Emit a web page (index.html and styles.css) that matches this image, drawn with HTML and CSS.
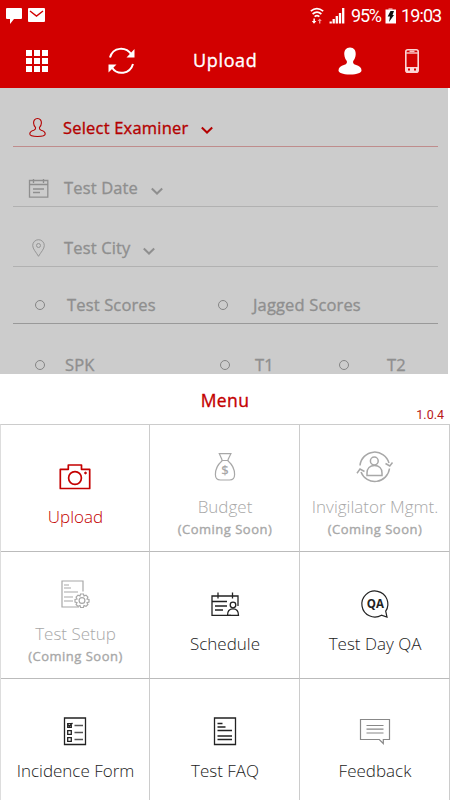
FILE: index.html
```html
<!DOCTYPE html>
<html lang="en">
<head>
    <meta charset="UTF-8">
    <meta name="viewport" content="width=device-width, initial-scale=1.0">
    <title>Upload</title>
    <link rel="stylesheet" href="styles.css">
</head>
<body>
    <div class="app">
        <div class="status-bar">
            <svg class="notifications" width="40" height="18" viewBox="0 0 40 18">
                <path fill="#fff" d="M1 1h14q1 0 1 1v9q0 1-1 1H8l-4 5v-5H1q-1 0-1-1V2q0-1 1-1zM23 1h15q1 0 1 1v12q0 1-1 1H23q-1 0-1-1V2q0-1 1-1z"/>
                <path fill="none" stroke="#d20000" stroke-width="1.4" d="M24 4l6.5 5L37 4"/>
            </svg>
            <svg width="35" height="18" viewBox="0 0 35 18">
                <g fill="none" stroke="#fff" stroke-width="1.7">
                    <path d="M0.8 4.2q6-5 12.4 0M2.6 7q4.400-3.600 8.800 0M4.600 9.600q2.400-1.800 4.800 0"/>
                    <path d="M20.700 16.500v-2M23.700 16.500V12M26.800 16.500V9M30 16.500V6M33.200 16.500V1" stroke-width="2.300"/>
                </g>
                <path fill="#fff" d="M3.400 11.500h1.500v2.500h1.500L4 16.800 1.800 14h1.600z"/>
                <path fill="#f39999" d="M9 16.500v-2.500H7.600l2.100-2.400 2.100 2.400h-1.400v2.500z"/>
            </svg>
            <span class="battery-text">95%</span>
            <svg width="12" height="18" viewBox="0 0 12 18">
                <path fill="#e77" d="M3.500 1h4v2h-4z"/>
                <path fill="#fff" d="M0.500 2.500h10.500V16.500H0.500z"/>
                <path fill="#111" d="M5.500 4h3.500L7.500 8H9l-5 7 1-5.500H2.700z"/>
            </svg>
            <span class="clock">19:03</span>
        </div>

        <div class="header">
            <svg class="grid-icon" width="22" height="22" viewBox="0 0 22 22" fill="#fff">
                <path d="M0 0h6v6H0zM8 0h6v6H8zM16 0h6v6h-6zM0 8h6v6H0zM8 8h6v6H8zM16 8h6v6h-6zM0 16h6v6H0zM8 16h6v6H8zM16 16h6v6h-6z"/>
            </svg>
            <svg class="sync-icon" width="28" height="28" viewBox="0 0 28 28">
                <path fill="none" stroke="#fff" stroke-width="2" d="M2 10.500C5 -.5 18 -.5 23.500 7.500M25 17C22 27.500 9 28.500 4 20.500"/>
                <path fill="#fff" d="M26.500 2v8.500h-8zM.500 17.500h8L.500 25.500z"/>
            </svg>
            <h1>Upload</h1>
            <svg class="user-icon" width="24" height="28" viewBox="0 0 24 28">
                <path fill="#fff" d="M12 .500c4 0 6 3 5.700 7-.2 3-1.200 5-2.500 6.500-.5 2 .2 3 2.300 3.800 4 1.200 6 3 6 5.700 0 2.200-4 4-11.500 4S.500 25.700.500 23.500c0-2.700 2-4.500 6-5.700 2.100-.8 2.800-1.800 2.300-3.800C7.500 12.500 6.500 10.500 6.300 7.500 6 3.500 8 .500 12 .500z"/>
            </svg>
            <svg width="14" height="24" viewBox="0 0 14 24">
                <rect x=".8" y=".8" width="12.400" height="22.400" rx="2" fill="none" stroke="#fbd5d5" stroke-width="1.600"/>
                <path fill="none" stroke="#f6bcbc" stroke-width="1.400" d="M1 4h12M4.500 2.300h5"/>
                <path fill="#fbd5d5" d="M1 18h12v5H1z"/>
                <path fill="#d20000" d="M3 19.500h2v2H3zM9 19.500h2v2H9z"/>
            </svg>
        </div>

        <div class="form">
            <div class="field active">
                <svg width="26" height="22" viewBox="0 0 26 22" fill="none" stroke="currentColor" stroke-width="1.100">
                    <path d="M12.500 2.500c2.700 0 4 2 3.900 4.500-.1 2-.8 3.500-2 4.700-.2 1.400.4 2 1.800 2.500 2.700.7 4 1.800 4 3.800 0 1.700-2.700 2.500-7.700 2.500S4.800 19.700 4.800 18c0-2 1.300-3.100 4-3.800 1.400-.5 2-1.100 1.800-2.500-1.200-1.200-1.900-2.700-2-4.700-.1-2.500 1.200-4.500 3.900-4.500z"/>
                </svg>
                <span class="examiner">Select Examiner</span>
                <svg class="chevron" width="12" height="8" viewBox="0 0 12 8"><path d="M.8 1.500L6 6.500l5.200-5"/></svg>
            </div>
            <div class="field">
                <svg width="26" height="22" viewBox="0 0 26 22" fill="none" stroke="currentColor" stroke-width="1.300">
                    <path d="M4.500 3.500h18.300v16.700H4.500zM4.500 7.500h18.300M8.500 2v4M18.500 2v4M8 12h11M8 15.500h7"/>
                </svg>
                <span class="date">Test Date</span>
                <svg class="chevron" width="12" height="8" viewBox="0 0 12 8"><path d="M.8 1.500L6 6.500l5.200-5"/></svg>
            </div>
            <div class="field">
                <svg width="26" height="22" viewBox="0 0 26 22" fill="none" stroke="currentColor" stroke-width=".9">
                    <path d="M13.500 19.300C11 15 7.700 12 7.700 8.500a5.800 5.800 0 0 1 11.600 0c0 3.500-3.300 6.500-5.800 10.800z"/>
                    <circle cx="13.500" cy="8.500" r="2"/>
                </svg>
                <span class="city">Test City</span>
                <svg class="chevron" width="12" height="8" viewBox="0 0 12 8"><path d="M.8 1.500L6 6.500l5.200-5"/></svg>
            </div>
            <div class="options scores">
                <div class="option"><i class="radio"></i><span>Test Scores</span></div>
                <div class="option"><i class="radio"></i><span>Jagged Scores</span></div>
            </div>
            <div class="options tests">
                <div class="option"><i class="radio"></i><span>SPK</span></div>
                <div class="option"><i class="radio"></i><span>T1</span></div>
                <div class="option"><i class="radio"></i><span>T2</span></div>
            </div>
        </div>

        <div class="menu-header">
            <h2>Menu</h2>
            <span class="version">1.0.4</span>
        </div>

        <div class="menu">
            <div class="item selected">
                <svg width="40" height="36" viewBox="0 0 40 36" fill="none" stroke="currentColor" stroke-width="1.700" stroke-linejoin="round">
                    <path d="M5.300 10.300h8V6h13.200v4.300h8.200v19.200H5.300z"/>
                    <circle cx="20" cy="19" r="6.400"/>
                    <circle cx="30.500" cy="14" r=".9" fill="currentColor" stroke-width="1"/>
                </svg>
                <span class="label">Upload</span>
            </div>
            <div class="item soon">
                <svg width="40" height="36" viewBox="0 0 40 36" fill="none" stroke="currentColor" stroke-width="1.200">
                    <path d="M14.300 4.700h11.600l-2.800 5.800v1.500c3.500 3 6.500 8 6.500 13.500 0 3.500-2 5.500-5 5.500h-9.200c-3 0-5-2-5-5.500 0-5.500 3-10.500 6.500-13.500v-1.500zM16.500 11.500h7"/>
                    <text class="dollar" x="20" y="26">$</text>
                </svg>
                <span class="label">Budget</span>
                <span class="note">(Coming Soon)</span>
            </div>
            <div class="item soon">
                <svg width="40" height="36" viewBox="0 0 40 36" fill="none" stroke="currentColor" stroke-width="1.500">
                    <path d="M5 16.500A14.800 14.800 0 0 1 34 14M34.500 19.500A14.800 14.800 0 0 1 6 23M30.500 14.500l4.300 2.500 2.700-3.500M2 24.300l3-4.300 4.500 2.500"/>
                    <circle cx="19.300" cy="12" r="3.900"/>
                    <path d="M12 26.500v-2.500c0-4.500 3-7.500 7.500-7.500s7.500 3 7.500 7.500v2.500z"/>
                </svg>
                <span class="label mgmt">Invigilator Mgmt.</span>
                <span class="note">(Coming Soon)</span>
            </div>

            <div class="item soon">
                <svg width="40" height="36" viewBox="0 0 40 36" fill="none" stroke="currentColor" stroke-width="1.200">
                    <path d="M28 15.500V5H7v26h17M9 9h5M9 12h7M9 16h14M9 21h9M9 25h9"/>
                    <circle cx="27" cy="24.500" r="2.900"/>
                    <path d="M25.500 18h3l.5 2 2-.9 1.900 2-.9 1.900 2 .5v2.500l-2 .6.9 1.900-1.900 1.900-2-.9-.6 2h-2.800l-.6-2-2 .9-1.900-1.900.9-1.900-2-.6v-2.500l2-.5-.9-1.900 1.900-2 2 .9z"/>
                </svg>
                <span class="label">Test Setup</span>
                <span class="note">(Coming Soon)</span>
            </div>
            <div class="item schedule">
                <svg width="40" height="36" viewBox="0 0 40 36" fill="none" stroke="currentColor" stroke-width="1.300">
                    <path d="M26 29.400H7V10h26v10M13 6.500v6M27.500 6.500v6M7 15.500h15M10 20h12M10 24h8"/>
                    <circle cx="28" cy="19" r="2.800"/>
                    <path d="M22.500 29.400c0-4 2-6.500 5.500-6.500s5.500 2.500 5.500 6.500z"/>
                </svg>
                <span class="label">Schedule</span>
            </div>
            <div class="item">
                <svg width="40" height="36" viewBox="0 0 40 36" fill="none" stroke="currentColor" stroke-width="1.200">
                    <path d="M26.500 29.200A13 13 0 1 1 30.700 25.200l1.300 5.800z"/>
                    <text class="qa" x="20.300" y="22.300">QA</text>
                </svg>
                <span class="label">Test Day QA</span>
            </div>

            <div class="item">
                <svg width="40" height="36" viewBox="0 0 40 36" fill="none" stroke="currentColor" stroke-width="1.300">
                    <path d="M9.500 5h21v26.500h-21z"/>
                    <path d="M12.700 10.700h3.600v3.600h-3.600zM12.700 17.700h3.600v3.600h-3.600zM12.700 24.700h3.600v3.600h-3.600zM12.500 11.500l2 1.700 3-3.200"/>
                    <path stroke="#555" d="M19.500 12.500H28M19.500 19.500H28M19.500 26.500H28"/>
                </svg>
                <span class="label">Incidence Form</span>
            </div>
            <div class="item">
                <svg width="40" height="36" viewBox="0 0 40 36" fill="none" stroke="currentColor" stroke-width="1.300">
                    <path d="M9.500 5h21v26.500h-21zM12.500 10.500h5M12.500 14h8M12.500 17.500H27M12.500 23H27M12.500 26.500H27"/>
                </svg>
                <span class="label">Test FAQ</span>
            </div>
            <div class="item feedback">
                <svg width="40" height="36" viewBox="0 0 40 36" fill="none" stroke="#888" stroke-width="1.200">
                    <path d="M5.500 6.500h29v20h-6.200v4l-4-4H5.500zM11.500 12.500h17M11.500 16.200h17M11.500 20h17"/>
                </svg>
                <span class="label">Feedback</span>
            </div>
        </div>
    </div>
</body>
</html>
```

FILE: styles.css
```css
* {
    box-sizing: border-box;
}

body {
    margin: 0;
    font-family: 'Open Sans', sans-serif;
    background-color: #fff;
}

.app {
    width: 450px;
    height: 800px;
    overflow: hidden;
}

svg {
    display: block;
    flex-shrink: 0;
}

/* Medium weight, between regular and semibold */
h1,
h2,
.form,
.note {
    -webkit-text-stroke: 0.35px currentColor;
}

/* Top bars */
.status-bar {
    display: flex;
    align-items: center;
    height: 32px;
    padding: 0 8px 0 6px;
    background-color: #d20000;
    color: #fff;
    font-family: Roboto, sans-serif;
    font-size: 18px;
    line-height: 32px;
}

.notifications {
    margin-right: auto;
}

.battery-text {
    width: 30px;
    margin: 0 4px 0 6px;
    letter-spacing: -1.2px;
}

.clock {
    width: 41px;
    margin-left: 4px;
    letter-spacing: -0.9px;
}

.battery-text,
.clock {
    height: 32px;
}

.header {
    display: flex;
    align-items: center;
    height: 56px;
    padding: 2px 31px 0 26px;
    background-color: #d20000;
    color: #fff;
}

.sync-icon {
    margin-left: 60px;
}

h1 {
    width: 66px;
    margin: 0 auto 2px 57px;
    font-size: 18px;
    font-weight: 400;
    line-height: 24px;
    letter-spacing: 0.65px;
}

.user-icon {
    margin-right: 43px;
}

/* Dimmed form */
.form {
    width: 448px;
    height: 286px;
    padding: 1px 10px 0 13px;
    overflow: hidden;
    background-color: #ccc;
    color: #8f8f8f;
    font-size: 16.5px;
    font-weight: 400;
    letter-spacing: 0.15px;
}

.field {
    display: flex;
    align-items: center;
    height: 60px;
    padding: 22px 0 0 12px;
    border-bottom: 1px solid #b1b1b1;
}

.field.active {
    height: 58px;
    padding: 20px 0 1px 12px;
    color: #b40000;
    border-bottom-color: #bf8c8c;
}

.field span {
    margin-left: 13px;
}

.field .examiner {
    margin-left: 12px;
    letter-spacing: 0.2px;
}

.chevron {
    margin: 6px 0 0 13px;
    fill: none;
    stroke: currentColor;
    stroke-width: 2;
}

.options {
    display: flex;
    align-items: center;
    padding-left: 22px;
}

.scores {
    height: 57px;
    padding-top: 19px;
    border-bottom: 1px solid #999;
}

.tests {
    height: 50px;
    padding-top: 31px;
}

.option {
    display: flex;
    align-items: center;
    flex-shrink: 0;
    line-height: 18px;
}

.scores .option {
    width: 183px;
    gap: 22px;
}

.scores .option + .option {
    gap: 25px;
}

.tests .option {
    width: 185px;
    gap: 20px;
}

.tests .option + .option {
    width: 119px;
    gap: 25px;
}

.tests .option:last-child {
    width: 90px;
    gap: 38px;
}

.radio {
    width: 10px;
    height: 10px;
    border: 1px solid #858585;
    border-radius: 50%;
}

/* Menu */
.menu-header {
    position: relative;
    height: 50px;
    text-align: center;
}

h2 {
    margin: 0;
    color: #c40000;
    font-size: 17.5px;
    font-weight: 400;
    line-height: 52px;
    letter-spacing: 0.4px;
}

.version {
    position: absolute;
    right: 6px;
    bottom: 1px;
    color: #b91818;
    font-family: Roboto, sans-serif;
    font-size: 12.5px;
    line-height: 16px;
}

.menu {
    display: grid;
    grid-template-columns: 149px 150px 150px;
    grid-auto-rows: 127px;
    border-top: 1px solid #ccc;
    border-left: 1px solid #ddd;
}

.item {
    display: flex;
    flex-direction: column;
    align-items: center;
    padding-top: 34px;
    border-right: 1px solid #ccc;
    border-bottom: 1px solid #bbb;
    color: #222;
}

.label {
    margin: 10px 0 0 1px;
    font-size: 17px;
    font-weight: 300;
    line-height: 24px;
    white-space: nowrap;
}

.note {
    margin-left: 1px;
    font-size: 13px;
    font-weight: 400;
    line-height: 20px;
    letter-spacing: 0.5px;
}

.selected {
    color: #c40000;
}

.soon {
    padding-top: 24px;
    color: #a8a8a8;
}

.dollar,
.qa {
    fill: currentColor;
    stroke: none;
    font-weight: 600;
    text-anchor: middle;
}

.dollar {
    font-size: 13px;
}

.qa {
    font-size: 11.5px;
    font-weight: 700;
}
```
